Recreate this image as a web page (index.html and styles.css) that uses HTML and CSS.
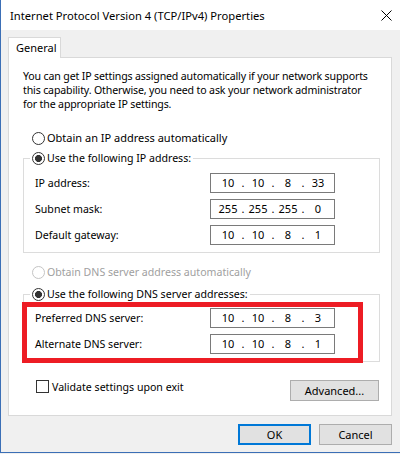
FILE: index.html
```html
<!DOCTYPE html>
<html lang="en">
<head>
    <meta charset="UTF-8">
    <title>Internet Protocol Version 4 (TCP/IPv4) Properties</title>
    <link rel="stylesheet" href="styles.css">
</head>
<body>
    <div class="window">
        <div class="titlebar">
            <span class="title">Internet Protocol Version 4 (TCP/IPv4) Properties</span>
            <svg class="close" width="11" height="11" viewBox="0 0 11 11">
                <path d="M0.5 0.5L10.5 10.5M10.5 0.5L0.5 10.5" stroke="#000" stroke-width="1" fill="none"/>
            </svg>
        </div>
        <div class="content">
            <div class="tabs">
                <div class="tab">General</div>
            </div>
            <div class="panel">
                <p class="intro">You can get IP settings assigned automatically if your network supports<br>this capability. Otherwise, you need to ask your network administrator<br>for the appropriate IP settings.</p>

                <label class="option first"><input type="radio" name="ip">Obtain an IP address automatically</label>

                <fieldset class="group">
                    <legend><label class="option"><input type="radio" name="ip" checked>Use the following IP address:</label></legend>
                    <div class="row">
                        <span class="label">IP address:</span>
                        <div class="ip"><span>10</span><i>.</i><span>10</span><i>.</i><span>8</span><i>.</i><span>33</span></div>
                    </div>
                    <div class="row">
                        <span class="label">Subnet mask:</span>
                        <div class="ip"><span>255</span><i>.</i><span>255</span><i>.</i><span>255</span><i>.</i><span>0</span></div>
                    </div>
                    <div class="row">
                        <span class="label">Default gateway:</span>
                        <div class="ip"><span>10</span><i>.</i><span>10</span><i>.</i><span>8</span><i>.</i><span>1</span></div>
                    </div>
                </fieldset>

                <label class="option disabled"><input type="radio" name="dns" disabled>Obtain DNS server address automatically</label>

                <fieldset class="group dns">
                    <legend><label class="option"><input type="radio" name="dns" checked>Use the following DNS server addresses:</label></legend>
                    <div class="row">
                        <span class="label">Preferred DNS server:</span>
                        <div class="ip"><span>10</span><i>.</i><span>10</span><i>.</i><span>8</span><i>.</i><span>3</span></div>
                    </div>
                    <div class="row">
                        <span class="label">Alternate DNS server:</span>
                        <div class="ip"><span>10</span><i>.</i><span>10</span><i>.</i><span>8</span><i>.</i><span>1</span></div>
                    </div>
                </fieldset>

                <div class="bottom-row">
                    <label class="check"><input type="checkbox">Validate settings upon exit</label>
                    <button class="btn advanced">Advanced...</button>
                </div>
            </div>
            <div class="actions">
                <button class="btn default">OK</button>
                <button class="btn">Cancel</button>
            </div>
        </div>
        <div class="highlight"></div>
    </div>
</body>
</html>
```
FILE: styles.css
```css
body {
    margin: 0;
    background-color: #f0f0f0;
    font-family: "Noto Sans", "Open Sans", sans-serif;
    font-size: 10.6px;
    color: #000;
}

.window {
    position: relative;
    width: 400px;
    height: 453px;
    box-sizing: border-box;
    border-left: 1px solid #3b6fb6;
    border-bottom: 1px solid #3b6fb6;
    background-color: #f0f0f0;
}

.titlebar {
    height: 30px;
    background-color: white;
    display: flex;
    align-items: center;
    justify-content: space-between;
    padding: 0 8px 0 9px;
    font-size: 11.2px;
}

.close {
    display: block;
}

.content {
    padding: 7px 8px 0 7px;
}

.tabs {
    display: flex;
    height: 20px;
}

.tab {
    position: relative;
    z-index: 1;
    height: 21px;
    box-sizing: border-box;
    padding: 0 7px;
    width: 53px;
    border: 1px solid #d9d9d9;
    border-bottom: none;
    background-color: white;
    line-height: 19px;
    font-size: 11px;
}

.panel {
    height: 359px;
    box-sizing: border-box;
    background-color: white;
    border: 1px solid #d9d9d9;
    padding: 11px 11px 0 14px;
}

.intro {
    margin: 0;
    line-height: 14px;
    white-space: nowrap;
    letter-spacing: -0.15px;
}

.option {
    display: flex;
    align-items: center;
    height: 16px;
    line-height: 16px;
}

.option input {
    appearance: none;
    margin: 0 2px 0 0;
    width: 13px;
    height: 13px;
    border: 1px solid #333;
    border-radius: 50%;
    background-color: white;
}

.option input:checked {
    background: radial-gradient(circle, #333 0 3.2px, white 3.8px);
}

.option.first {
    margin: 19px 0 0 9px;
    font-size: 11px;
}

.option.disabled {
    margin: 11px 0 0 9px;
    color: #a0a0a0;
}

.option.disabled input {
    border-color: #c4c4c4;
}

.group {
    margin: 4px 0 0 0;
    padding: 7px 6px 7px 6px;
    border: 1px solid #dcdcdc;
    min-width: 0;
}

.group.dns {
    margin-top: 6px;
    padding-top: 6px;
}

.group legend {
    padding: 0 2px;
}

.row {
    display: flex;
    align-items: center;
    height: 20px;
    padding-left: 5px;
}

.row + .row {
    margin-top: 6px;
}

.label {
    width: 175px;
}

.ip {
    display: flex;
    width: 125px;
    height: 20px;
    box-sizing: border-box;
    border: 1px solid #7a7a7a;
    padding-left: 5px;
    line-height: 18px;
    font-size: 11px;
}

.ip span {
    width: 24px;
    text-align: center;
}

.ip i {
    font-style: normal;
    width: 6px;
    text-align: center;
}

.bottom-row {
    display: flex;
    justify-content: space-between;
    align-items: flex-start;
    margin-top: 18px;
}

.check {
    display: flex;
    align-items: center;
    margin-left: 13px;
    height: 13px;
}

.check input {
    appearance: none;
    margin: 0 3px 0 0;
    width: 13px;
    height: 13px;
    border: 1px solid #333;
    background-color: white;
}

.btn {
    font-family: inherit;
    font-size: 11px;
    color: #000;
    height: 21px;
    padding: 0;
    background-color: #e1e1e1;
    border: 1px solid #adadad;
    border-radius: 0;
}

.advanced {
    width: 89px;
    margin-right: 1px;
}

.actions {
    display: flex;
    justify-content: flex-end;
    gap: 8px;
    margin-top: 8px;
}

.actions .btn {
    width: 73px;
}

.btn.default {
    border: 2px solid #0078d7;
}

.highlight {
    position: absolute;
    left: 21px;
    top: 302px;
    width: 341px;
    height: 61px;
    box-sizing: border-box;
    border: 5px solid #ed1c24;
}
```
